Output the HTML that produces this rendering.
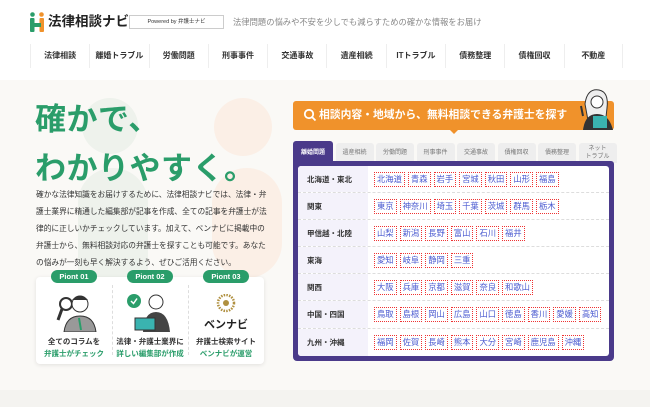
<!DOCTYPE html>
<html><head><meta charset="utf-8"><style>
*{margin:0;padding:0;box-sizing:border-box}
body{width:650px;height:407px;overflow:hidden;font-family:"Liberation Sans","Noto Sans CJK JP",sans-serif;background:#fff;position:relative;color:#333}
.abs{position:absolute}
.nav{position:absolute;left:30px;top:44px;display:flex;height:24px}
.nav div{width:59.3px;font-size:8px;font-weight:bold;text-align:center;line-height:24px;border-left:1px solid #eee;color:#333}
.hero{position:absolute;left:0;top:80px;width:650px;height:310px;background:#faf9f6}
.circ{position:absolute;border-radius:50%}
h1{position:absolute;left:35px;top:95px;font-size:31px;line-height:49px;color:#2a9d6a;font-weight:bold;letter-spacing:0.5px}
.para{position:absolute;left:36px;top:186px;width:232px;font-size:7.7px;line-height:17px;color:#333}
.card{position:absolute;left:36px;top:277px;width:228px;height:87px;background:#fff;border-radius:4px;box-shadow:0 1px 4px rgba(0,0,0,.1)}
.badge{position:absolute;top:270px;width:46px;height:13px;border-radius:7px;background:#2a9d6a;color:#fff;font-size:7.5px;font-weight:bold;text-align:center;line-height:13px}
.pt{position:absolute;top:336px;width:76px;text-align:center;font-size:7.5px;font-weight:bold;line-height:12px}
.pt span{color:#2a9d6a}
.banner{position:absolute;left:293px;top:101px;width:321px;height:29px;background:#f0922b;border-radius:3px;color:#fff;font-weight:bold;font-size:10.8px;line-height:29px;padding-left:26px}
.tabs{position:absolute;left:293px;top:143px;display:flex}
.tabs div{width:38px;height:20px;margin-right:2.5px;background:#eee;border-radius:3px 3px 0 0;font-size:6px;color:#777;text-align:center;line-height:20px}
.tabs div.on{background:#4a3a8a;color:#fff;font-weight:bold;width:40px;height:22px;margin-top:-2px;line-height:24px}
.panel{position:absolute;left:293px;top:161px;width:321px;height:200px;background:#4a3a8a;border-radius:0 3px 4px 4px}
.inner{position:absolute;left:5px;top:5px;width:311px;height:190px;background:#fff;border-radius:3px;overflow:hidden}
.row{height:27.1px;display:flex;align-items:center;border-bottom:1px dashed #ddd;position:relative}
.row:last-child{border-bottom:none}
.lab{width:70px;height:100%;background:#f4f2fb;font-size:7.5px;font-weight:bold;line-height:27px;padding-left:9px;color:#333;flex:none}
.chips{display:flex;padding-left:6px}
.chips span{border:1px dotted #e33;color:#4a5ad0;font-size:8.3px;padding:0 2px;height:15px;line-height:13px;margin-right:3px;background:#fff}
</style></head><body>
<svg class="abs" style="left:30px;top:12px" width="14" height="20" viewBox="0 0 14 20"><circle cx="2.5" cy="2.5" r="2.3" fill="#2a9d6a"/><circle cx="11.5" cy="2.5" r="2.3" fill="#f0922b"/><rect x="0" y="6" width="4.5" height="14" rx="1" fill="#2a9d6a"/><rect x="9.5" y="6" width="4.5" height="14" rx="1" fill="#f0922b"/><rect x="3" y="11" width="8" height="4" fill="#2a9d6a"/></svg>
<div class="abs" style="left:48px;top:12px;font-size:13.5px;font-weight:bold;color:#222;line-height:20px">法律相談ナビ</div>
<div class="abs" style="left:129px;top:15px;width:95px;height:14px;border:1px solid #ccc;font-size:5.5px;line-height:12px;text-align:center;color:#333">Powered by 弁護士ナビ</div>
<div class="abs" style="left:233px;top:15px;font-size:8.3px;color:#888;line-height:14px">法律問題の悩みや不安を少しでも減らすための確かな情報をお届け</div>
<div class="nav"><div>法律相談</div><div>離婚トラブル</div><div>労働問題</div><div>刑事事件</div><div>交通事故</div><div>遺産相続</div><div>ITトラブル</div><div>債務整理</div><div>債権回収</div><div style="border-right:1px solid #eee">不動産</div></div>
<div class="hero"></div>
<div class="abs" style="left:0;top:390px;width:650px;height:17px;background:#f4f3f0"></div>
<div class="circ" style="left:82px;top:98px;width:56px;height:56px;background:#eef2ec"></div>
<div class="circ" style="left:214px;top:98px;width:58px;height:58px;background:#fbefe6"></div>
<div class="circ" style="left:78px;top:168px;width:70px;height:150px;border-radius:35px;background:#eef2ec"></div>
<div class="circ" style="left:212px;top:168px;width:70px;height:110px;border-radius:35px;background:#fbefe6"></div>
<h1>確かで、<br>わかりやすく。</h1>
<div class="para">確かな法律知識をお届けするために、法律相談ナビでは、法律・弁護士業界に精通した編集部が記事を作成、全ての記事を弁護士が法律的に正しいかチェックしています。加えて、ベンナビに掲載中の弁護士から、無料相談対応の弁護士を探すことも可能です。あなたの悩みが一刻も早く解決するよう、ぜひご活用ください。</div>
<div class="card"></div>
<div class="abs" style="left:112px;top:285px;height:70px;border-left:1px dashed #ddd"></div>
<div class="abs" style="left:188px;top:285px;height:70px;border-left:1px dashed #ddd"></div>
<div class="badge" style="left:51px">Piont 01</div>
<div class="badge" style="left:127px">Piont 02</div>
<div class="badge" style="left:203px">Piont 03</div>
<svg class="abs" style="left:52px;top:290px" width="46" height="42"><circle cx="14" cy="14" r="6" fill="none" stroke="#333" stroke-width="2"/><line x1="10" y1="19" x2="6" y2="30" stroke="#333" stroke-width="3"/><circle cx="28" cy="14" r="8" fill="#fff" stroke="#333"/><path d="M20 10 Q28 2 36 10" fill="#333"/><path d="M12 42 Q14 26 28 26 Q42 26 44 42Z" fill="#999" stroke="#333"/><path d="M27 28 L29 40" stroke="#2a9d6a" stroke-width="2"/></svg>
<svg class="abs" style="left:126px;top:292px" width="50" height="42"><circle cx="8" cy="9" r="7" fill="#2a9d6a"/><path d="M5 9 L7.5 11.5 L11 6.5" stroke="#fff" stroke-width="1.5" fill="none"/><circle cx="30" cy="10" r="7" fill="#fff" stroke="#333"/><path d="M17 40 Q18 20 30 20 Q42 20 44 40Z" fill="#444"/><rect x="9" y="26" width="20" height="12" fill="#3ab3b0" stroke="#333"/></svg>
<svg class="abs" style="left:211px;top:294px" width="30" height="22"><circle cx="15" cy="9" r="8" fill="none" stroke="#b09040" stroke-dasharray="1.5 1.2" stroke-width="2.5"/><circle cx="15" cy="9" r="3" fill="#b09040"/></svg>
<div class="abs" style="left:202px;top:316px;width:48px;text-align:center;font-size:11px;font-weight:bold;color:#222">ベンナビ</div>
<div class="pt" style="left:36px">全てのコラムを<br><span>弁護士がチェック</span></div>
<div class="pt" style="left:112px">法律・弁護士業界に<br><span>詳しい編集部が作成</span></div>
<div class="pt" style="left:188px">弁護士検索サイト<br><span>ベンナビが運営</span></div>
<div class="banner">相談内容・地域から、無料相談できる弁護士を探す</div>
<svg class="abs" style="left:303px;top:108px" width="14" height="14"><circle cx="6" cy="6" r="4.2" fill="none" stroke="#fff" stroke-width="1.8"/><line x1="9" y1="9" x2="12.5" y2="12.5" stroke="#fff" stroke-width="1.8"/></svg>
<div class="abs" style="left:449px;top:129px;width:0;height:0;border-left:5px solid transparent;border-right:5px solid transparent;border-top:5px solid #f0922b"></div>
<svg class="abs" style="left:575px;top:86px" width="40" height="44"><path d="M10 18 Q12 2 24 4 Q34 6 32 22 L30 40 L14 40Z" fill="#eee" stroke="#333"/><circle cx="22" cy="16" r="6" fill="#fff" stroke="#333"/><path d="M8 44 Q10 28 22 28 Q34 28 38 44Z" fill="#333"/><rect x="18" y="30" width="14" height="12" fill="#3ab3b0"/><path d="M8 30 L6 20" stroke="#333" stroke-width="2"/></svg>
<div class="tabs"><div class="on">離婚問題</div><div>遺産相続</div><div>労働問題</div><div>刑事事件</div><div>交通事故</div><div>債権回収</div><div>債務整理</div><div style="line-height:8px;padding-top:2px">ネット<br>トラブル</div></div>
<div class="panel"><div class="inner">
<div class="row"><div class="lab">北海道・東北</div><div class="chips"><span>北海道</span><span>青森</span><span>岩手</span><span>宮城</span><span>秋田</span><span>山形</span><span>福島</span></div></div>
<div class="row"><div class="lab">関東</div><div class="chips"><span>東京</span><span>神奈川</span><span>埼玉</span><span>千葉</span><span>茨城</span><span>群馬</span><span>栃木</span></div></div>
<div class="row"><div class="lab">甲信越・北陸</div><div class="chips"><span>山梨</span><span>新潟</span><span>長野</span><span>富山</span><span>石川</span><span>福井</span></div></div>
<div class="row"><div class="lab">東海</div><div class="chips"><span>愛知</span><span>岐阜</span><span>静岡</span><span>三重</span></div></div>
<div class="row"><div class="lab">関西</div><div class="chips"><span>大阪</span><span>兵庫</span><span>京都</span><span>滋賀</span><span>奈良</span><span>和歌山</span></div></div>
<div class="row"><div class="lab">中国・四国</div><div class="chips"><span>鳥取</span><span>島根</span><span>岡山</span><span>広島</span><span>山口</span><span>徳島</span><span>香川</span><span>愛媛</span><span>高知</span></div></div>
<div class="row"><div class="lab">九州・沖縄</div><div class="chips"><span>福岡</span><span>佐賀</span><span>長崎</span><span>熊本</span><span>大分</span><span>宮崎</span><span>鹿児島</span><span>沖縄</span></div></div>
</div></div>
</body></html>
